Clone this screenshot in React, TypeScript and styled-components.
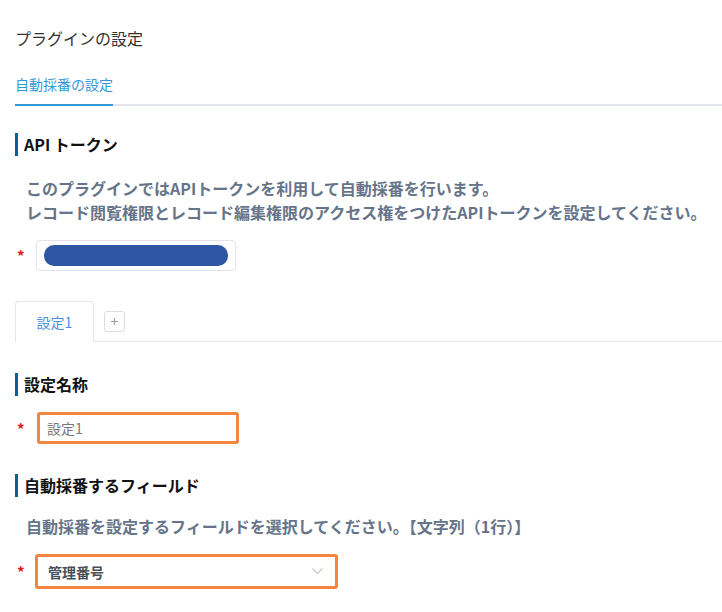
import styled, { createGlobalStyle } from "styled-components";

const GlobalStyle = createGlobalStyle`
  html, body {
    margin: 0;
    padding: 0;
    background: #fff;
  }
  body {
    font-family: "Noto Sans CJK JP", "Noto Sans", sans-serif;
    color: #333;
  }
`;

const Page = styled.div`
  width: 722px;
  height: 612px;
  overflow: hidden;
  padding: 26px 0 0 15px;
  box-sizing: border-box;
`;

const Title = styled.div`
  font-size: 16px;
  line-height: 24px;
  color: #333;
`;

const TabBar = styled.div`
  display: flex;
  margin-top: 24px;
  border-bottom: 2px solid #e3e7ed;
`;

const TabItem = styled.div`
  font-size: 14px;
  line-height: 20px;
  color: #3498db;
  padding-bottom: 10px;
  margin-bottom: -2px;
  border-bottom: 2px solid #3498db;
`;

const Section = styled.div<{ $top: number }>`
  margin-top: ${(p) => p.$top}px;
`;

const Heading = styled.div`
  display: flex;
  align-items: center;
  gap: 6px;
  font-size: 16px;
  font-weight: 700;
  line-height: 23px;
  color: #111;
  &::before {
    content: "";
    display: block;
    width: 3px;
    height: 23px;
    background: #0a5f94;
  }
`;

const Desc = styled.div<{ $top: number }>`
  margin: ${(p) => p.$top}px 0 0 11px;
  font-size: 16px;
  font-weight: 700;
  line-height: 24px;
  color: #66748a;
  white-space: nowrap;
`;

const FieldRow = styled.div<{ $top: number }>`
  display: flex;
  align-items: center;
  margin-top: ${(p) => p.$top}px;
`;

const Required = styled.span`
  width: 18px;
  padding-left: 2px;
  color: #e41a1a;
  font-size: 15px;
  font-weight: 700;
  line-height: 1;
`;

const TokenBox = styled.div`
  width: 200px;
  height: 31px;
  box-sizing: border-box;
  border: 1px solid #e0e3ea;
  border-radius: 4px;
  padding: 4px 7px;
  margin-left: 1px;
`;

const Redacted = styled.div`
  height: 21px;
  border-radius: 10px;
  background: #2e56a3;
`;

const SubTabs = styled.div`
  display: flex;
  align-items: center;
  margin-top: 30px;
  border-bottom: 1px solid #e3e7ed;
`;

const SubTab = styled.div`
  width: 79px;
  height: 41px;
  box-sizing: border-box;
  border: 1px solid #e3e7ed;
  border-bottom: none;
  border-radius: 4px 4px 0 0;
  background: #fff;
  margin-bottom: -1px;
  display: flex;
  align-items: center;
  justify-content: center;
  font-size: 14px;
  color: #4a90e2;
`;

const AddButton = styled.div`
  width: 21px;
  height: 21px;
  box-sizing: border-box;
  margin-left: 10px;
  border: 1px solid #d9dde4;
  border-radius: 3px;
  display: flex;
  align-items: center;
  justify-content: center;
  color: #999;
  font-size: 14px;
  line-height: 1;
`;

const OrangeBox = styled.div<{ $width: number; $height: number; $shift: number }>`
  width: ${(p) => p.$width}px;
  height: ${(p) => p.$height}px;
  margin-left: ${(p) => p.$shift}px;
  box-sizing: border-box;
  border: 3px solid #f5843e;
  border-radius: 3px;
  display: flex;
  align-items: center;
  justify-content: space-between;
`;

const InputText = styled.span`
  font-size: 14px;
  color: #777;
  padding-left: 7px;
`;

const SelectText = styled.span`
  font-size: 14px;
  font-weight: 700;
  color: #4a4f57;
  padding-left: 10px;
`;

const Chevron = styled.svg`
  margin-right: 12px;
`;

const App = () => {
  return (
    <>
      <GlobalStyle />
      <Page>
        <Title>プラグインの設定</Title>
        <TabBar>
          <TabItem>自動採番の設定</TabItem>
        </TabBar>

        <Section $top={27}>
          <Heading>API トークン</Heading>
          <Desc $top={20}>
            このプラグインではAPIトークンを利用して自動採番を行います。
            <br />
            レコード閲覧権限とレコード編集権限のアクセス権をつけたAPIトークンを設定してください。
          </Desc>
          <FieldRow $top={16}>
            <Required>*</Required>
            <TokenBox>
              <Redacted />
            </TokenBox>
          </FieldRow>
        </Section>

        <SubTabs>
          <SubTab>設定1</SubTab>
          <AddButton>+</AddButton>
        </SubTabs>

        <Section $top={31}>
          <Heading>設定名称</Heading>
          <FieldRow $top={16}>
            <Required>*</Required>
            <OrangeBox $width={202} $height={32} $shift={2}>
              <InputText>設定1</InputText>
            </OrangeBox>
          </FieldRow>
        </Section>

        <Section $top={30}>
          <Heading>自動採番するフィールド</Heading>
          <Desc $top={17}>
            自動採番を設定するフィールドを選択してください。【文字列（1行）】
          </Desc>
          <FieldRow $top={16}>
            <Required>*</Required>
            <OrangeBox $width={303} $height={35} $shift={0}>
              <SelectText>管理番号</SelectText>
              <Chevron width="11" height="7" viewBox="0 0 11 7">
                <path d="M0.5 0.5 L5.5 5.5 L10.5 0.5" fill="none" stroke="#c4c8ce" strokeWidth="1.2" />
              </Chevron>
            </OrangeBox>
          </FieldRow>
        </Section>
      </Page>
    </>
  );
};

export default App;
